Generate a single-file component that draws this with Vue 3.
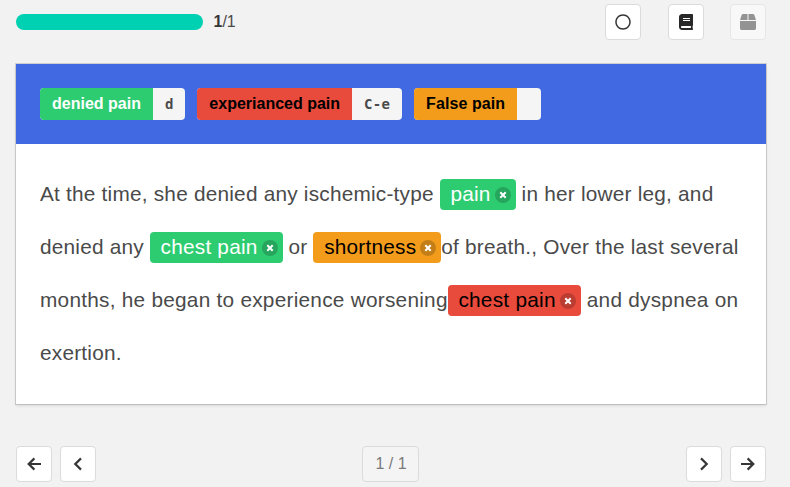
<script setup>
const labels = [
  { text: 'denied pain', key: 'd', tone: 'green' },
  { text: 'experianced pain', key: 'C-e', tone: 'red' },
  { text: 'False pain', key: '', tone: 'orange' },
]
const lines = [
  [{ t: 'At the time, she denied any ischemic-type ' }, { t: 'pain', tone: 'green' }, { t: ' in her lower leg, and' }],
  [{ t: 'denied any ' }, { t: 'chest pain', tone: 'green' }, { t: ' or ' }, { t: 'shortness', tone: 'orange' }, { t: 'of breath., Over the last several' }],
  [{ t: 'months, he began to experience worsening' }, { t: 'chest pain', tone: 'red' }, { t: ' and dyspnea on' }],
  [{ t: 'exertion.' }],
]
</script>

<template>
  <main class="page">
    <header class="top">
      <div class="bar"></div>
      <span class="count"><strong>1</strong>/1</span>
      <div class="tools">
        <button class="btn"><svg width="16" height="16" viewBox="0 0 512 512"><path d="M256 8C119 8 8 119 8 256s111 248 248 248 248-111 248-248S393 8 256 8zm0 448c-110.500 0-200-89.500-200-200S145.500 56 256 56s200 89.500 200 200-89.500 200-200 200z" /></svg></button>
        <button class="btn book"><svg width="14" height="16" viewBox="0 0 448 512"><path d="M448 360V24c0-13.300-10.700-24-24-24H96C43 0 0 43 0 96v320c0 53 43 96 96 96h328c13.300 0 24-10.700 24-24v-16c0-7.500-3.500-14.300-8.900-18.700-4.200-15.400-4.200-59.300 0-74.700 5.400-4.300 8.900-11.100 8.900-18.600zM128 134c0-3.300 2.700-6 6-6h212c3.300 0 6 2.700 6 6v20c0 3.300-2.700 6-6 6H134c-3.300 0-6-2.700-6-6v-20zm0 64c0-3.300 2.700-6 6-6h212c3.300 0 6 2.700 6 6v20c0 3.300-2.700 6-6 6H134c-3.300 0-6-2.700-6-6v-20zm253.400 250H96c-17.700 0-32-14.300-32-32 0-17.600 14.400-32 32-32h285.400c-1.900 17.100-1.900 46.900 0 64z" /></svg></button>
        <button class="btn box"><svg width="16" height="16" viewBox="0 0 512 512"><path d="M509.500 184.600L458.900 32.800C452.400 13.200 434.100 0 413.400 0H272v192h238.700c-.4-2.500-.4-5-1.200-7.400zM240 0H98.600c-20.700 0-39 13.200-45.500 32.800L2.500 184.600c-.8 2.400-.8 4.900-1.200 7.400H240V0zM0 224v240c0 26.500 21.500 48 48 48h416c26.500 0 48-21.500 48-48V224H0z" /></svg></button>
      </div>
    </header>

    <section class="card">
      <div class="labels">
        <div v-for="l in labels" :key="l.text" class="tags">
          <span class="name" :class="l.tone">{{ l.text }}</span>
          <kbd>{{ l.key }}</kbd>
        </div>
      </div>
      <div class="text">
        <div v-for="(line, i) in lines" :key="i" class="line">
          <template v-for="(p, j) in line" :key="j">
            <span v-if="p.tone" class="mark" :class="p.tone"><span class="word">{{ p.t }}</span><svg class="del" width="16" height="16" viewBox="0 0 16 16"><circle cx="8" cy="8" r="8" fill="#0a0a0a" fill-opacity=".2" /><path d="M5.300 5.300l5.400 5.400M10.700 5.300l-5.400 5.400" fill="none" stroke="#fff" stroke-width="2" /></svg></span>
            <span v-else class="word">{{ p.t }}</span>
          </template>
        </div>
      </div>
    </section>

    <nav class="pager">
      <div class="group">
        <button class="btn"><svg class="stroke" width="16" height="16" viewBox="0 0 16 16"><path d="M8.400 2.400L2.700 8l5.700 5.600M2.700 8H15" /></svg></button>
        <button class="btn"><svg class="stroke" width="16" height="16" viewBox="0 0 16 16"><path d="M11 2.400L5.300 8l5.700 5.600" /></svg></button>
      </div>
      <span class="pages">1 / 1</span>
      <div class="group">
        <button class="btn"><svg class="stroke" width="16" height="16" viewBox="0 0 16 16"><path d="M5 2.400L10.700 8 5 13.600" /></svg></button>
        <button class="btn"><svg class="stroke" width="16" height="16" viewBox="0 0 16 16"><path d="M7.600 2.400L13.300 8l-5.700 5.600M13.300 8H1" /></svg></button>
      </div>
    </nav>
  </main>
</template>

<style>
body { background: #f2f2f2; overflow: hidden; }
</style>

<style scoped>
* { box-sizing: border-box; }
.page { height: 487px; padding: 4px 24px 0 16px; font: 16px "Liberation Sans", Arial, sans-serif; color: #4a4a4a; }
.top { display: flex; align-items: center; height: 36px; }
.bar { width: 187px; height: 16px; border-radius: 8px; background: #00d1b2; }
.count { margin-left: 10.500px; }
strong { color: #363636; }
.tools { display: flex; margin-left: auto; }
.btn { width: 36px; height: 36px; padding: 0; display: flex; align-items: center; justify-content: center; background: #fff; border: 1px solid #dbdbdb; border-radius: 4px; color: #363636; }
.btn svg { fill: currentColor; }
.btn .stroke { fill: none; stroke: #363636; stroke-width: 2.200; }
.book { margin-left: 27px; color: #282828; }
.box { margin-left: 26px; opacity: .5; }
.card { margin-top: 24px; height: 340px; background: #fff; box-shadow: 0 2px 3px rgba(10, 10, 10, .1), 0 0 0 1px rgba(10, 10, 10, .15); }
.labels { height: 80px; padding: 24px; display: flex; gap: 12px; background: #4169e1; }
.tags { display: flex; height: 32px; border-radius: 4px; overflow: hidden; background: #f5f5f5; }
.name { padding: 0 12px; line-height: 32px; font-weight: 700; white-space: nowrap; }
.name.orange { letter-spacing: .08px; }
kbd { min-width: 24px; padding: 0 12px; font: 700 14px/33px "DejaVu Sans Mono", monospace; color: #4a4a4a; }
.tags:nth-child(2) kbd { letter-spacing: .25px; }
.green { background: #2ecc71; color: #fff; }
.red { background: #e84a3b; color: #000; }
.orange { background: #f39c1c; color: #000; }
.text { padding: 24px; font-size: 20.800px; letter-spacing: .215px; }
.line { display: flex; align-items: center; height: 53px; white-space: pre; }
.line:nth-child(3) { letter-spacing: .25px; }
.word { padding-bottom: 2px; }
.mark { display: flex; align-items: center; height: 31px; padding: 0 5px 0 10.700px; border-radius: 4px; }
.del { margin-left: 4px; }
.pager { display: flex; margin-top: 42px; }
.group { display: flex; gap: 8px; }
.group:last-child { margin-left: auto; }
.pages { width: 57px; height: 36px; margin-left: 266px; padding-left: 1px; line-height: 34px; text-align: center; background: #f4f4f4; border: 1px solid #dbdbdb; border-radius: 4px; color: #7a7a7a; }
</style>
